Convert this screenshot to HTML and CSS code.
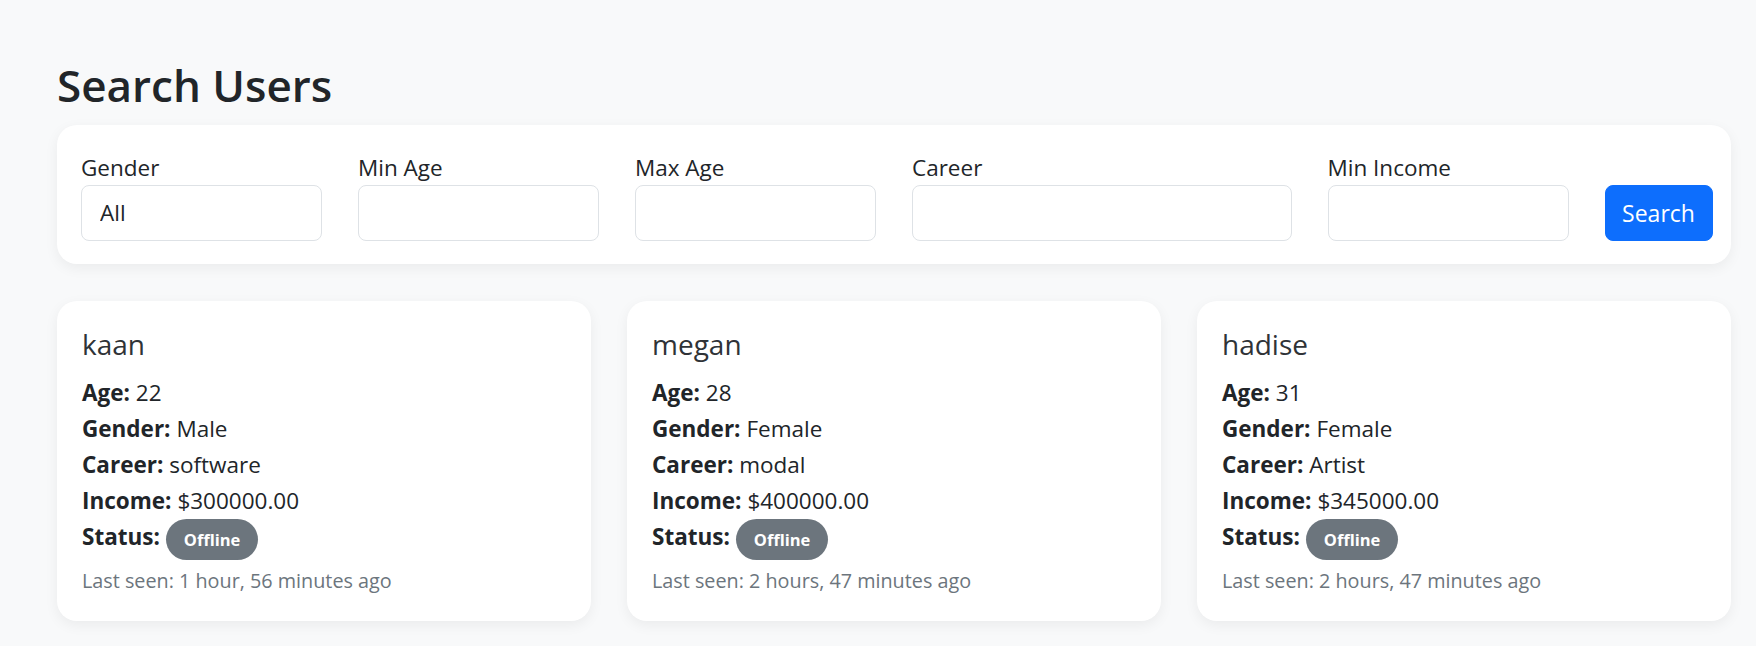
FILE: index.html
```html
<!DOCTYPE html>
<html lang="en">
<head>
<meta charset="utf-8">
<title>Search Users</title>
<link rel="stylesheet" href="styles.css">
</head>
<body>
<main class="page">
  <h1 class="page-title">Search Users</h1>

  <form class="filter-card">
    <div class="field">
      <label class="field-label" for="gender">Gender</label>
      <select class="field-input" id="gender"><option>All</option></select>
    </div>
    <div class="field">
      <label class="field-label" for="minage">Min Age</label>
      <input class="field-input" id="minage" type="text">
    </div>
    <div class="field">
      <label class="field-label" for="maxage">Max Age</label>
      <input class="field-input" id="maxage" type="text">
    </div>
    <div class="field">
      <label class="field-label" for="career">Career</label>
      <input class="field-input" id="career" type="text">
    </div>
    <div class="field">
      <label class="field-label" for="income">Min Income</label>
      <input class="field-input" id="income" type="text">
    </div>
    <div class="field field-action">
      <button class="search-btn" type="button">Search</button>
    </div>
  </form>

  <section class="user-grid">
    <article class="user-card">
      <h5 class="user-name">kaan</h5>
      <p class="user-row"><strong>Age:</strong> 22</p>
      <p class="user-row"><strong>Gender:</strong> Male</p>
      <p class="user-row"><strong>Career:</strong> software</p>
      <p class="user-row"><strong>Income:</strong> $300000.00</p>
      <p class="user-row"><strong>Status:</strong> <span class="badge">Offline</span></p>
      <p class="last-seen">Last seen: 1 hour, 56 minutes ago</p>
    </article>
    <article class="user-card">
      <h5 class="user-name">megan</h5>
      <p class="user-row"><strong>Age:</strong> 28</p>
      <p class="user-row"><strong>Gender:</strong> Female</p>
      <p class="user-row"><strong>Career:</strong> modal</p>
      <p class="user-row"><strong>Income:</strong> $400000.00</p>
      <p class="user-row"><strong>Status:</strong> <span class="badge">Offline</span></p>
      <p class="last-seen">Last seen: 2 hours, 47 minutes ago</p>
    </article>
    <article class="user-card">
      <h5 class="user-name">hadise</h5>
      <p class="user-row"><strong>Age:</strong> 31</p>
      <p class="user-row"><strong>Gender:</strong> Female</p>
      <p class="user-row"><strong>Career:</strong> Artist</p>
      <p class="user-row"><strong>Income:</strong> $345000.00</p>
      <p class="user-row"><strong>Status:</strong> <span class="badge">Offline</span></p>
      <p class="last-seen">Last seen: 2 hours, 47 minutes ago</p>
    </article>
  </section>
</main>
</body>
</html>
```

FILE: styles.css
```css
* { box-sizing: border-box; }

body {
  margin: 0;
  background: #f8f9fa;
  color: #212529;
  font-family: "Open Sans", "Noto Sans", sans-serif;
  font-size: 22.5px;
  line-height: 1.5;
}

.page {
  padding: 57px 25px 40px 57px;
}

.page-title {
  margin: 0 0 12px;
  font-size: 44px;
  font-weight: 600;
  line-height: 1.28;
  color: #212529;
}

.filter-card {
  background: #fff;
  border-radius: 20px;
  box-shadow: 0 4px 14px rgba(0, 0, 0, 0.06);
  padding: 26px 24px 23px 24px;
  display: grid;
  grid-template-columns: 241px 241px 241px 379.5px 241px 102.5px;
  column-gap: 36px;
  align-items: end;
}

.field {
  display: flex;
  flex-direction: column;
  min-width: 0;
}

.field-label {
  display: block;
  font-size: 22.5px;
  line-height: 33.75px;
}

.field-input {
  appearance: none;
  -webkit-appearance: none;
  display: block;
  width: 100%;
  height: 56px;
  padding: 0 18px;
  font: inherit;
  font-size: 22.5px;
  color: #212529;
  background: #fff;
  border: 1px solid #dee2e6;
  border-radius: 8px;
  outline: none;
}

.field-action {
  overflow: visible;
}

.search-btn {
  width: 108px;
  height: 56px;
  padding: 0;
  font: inherit;
  font-size: 23px;
  color: #fff;
  background: #0d6efd;
  border: 1px solid #0d6efd;
  border-radius: 8px;
  cursor: pointer;
}

.user-grid {
  margin-top: 37px;
  display: grid;
  grid-template-columns: repeat(3, 1fr);
  column-gap: 36px;
}

.user-card {
  background: #fff;
  border-radius: 20px;
  box-shadow: 0 4px 14px rgba(0, 0, 0, 0.06);
  padding: 25px 24px 26px 25px;
}

.user-name {
  margin: 0 0 14px;
  font-size: 28px;
  font-weight: 500;
  line-height: 36px;
  color: #2f3337;
}

.user-row {
  margin: 0 0 2.25px;
  line-height: 33.75px;
}

.user-row strong {
  font-weight: 700;
}

.badge {
  display: inline-block;
  vertical-align: middle;
  margin: -4px 0;
  padding: 10px 18px;
  font-size: 16.5px;
  line-height: 21px;
  font-weight: 700;
  color: #fff;
  background: #6c757d;
  border-radius: 999px;
}

.last-seen {
  margin: 10px 0 0;
  font-size: 19.8px;
  line-height: 29.5px;
  color: #6c757d;
}
```
